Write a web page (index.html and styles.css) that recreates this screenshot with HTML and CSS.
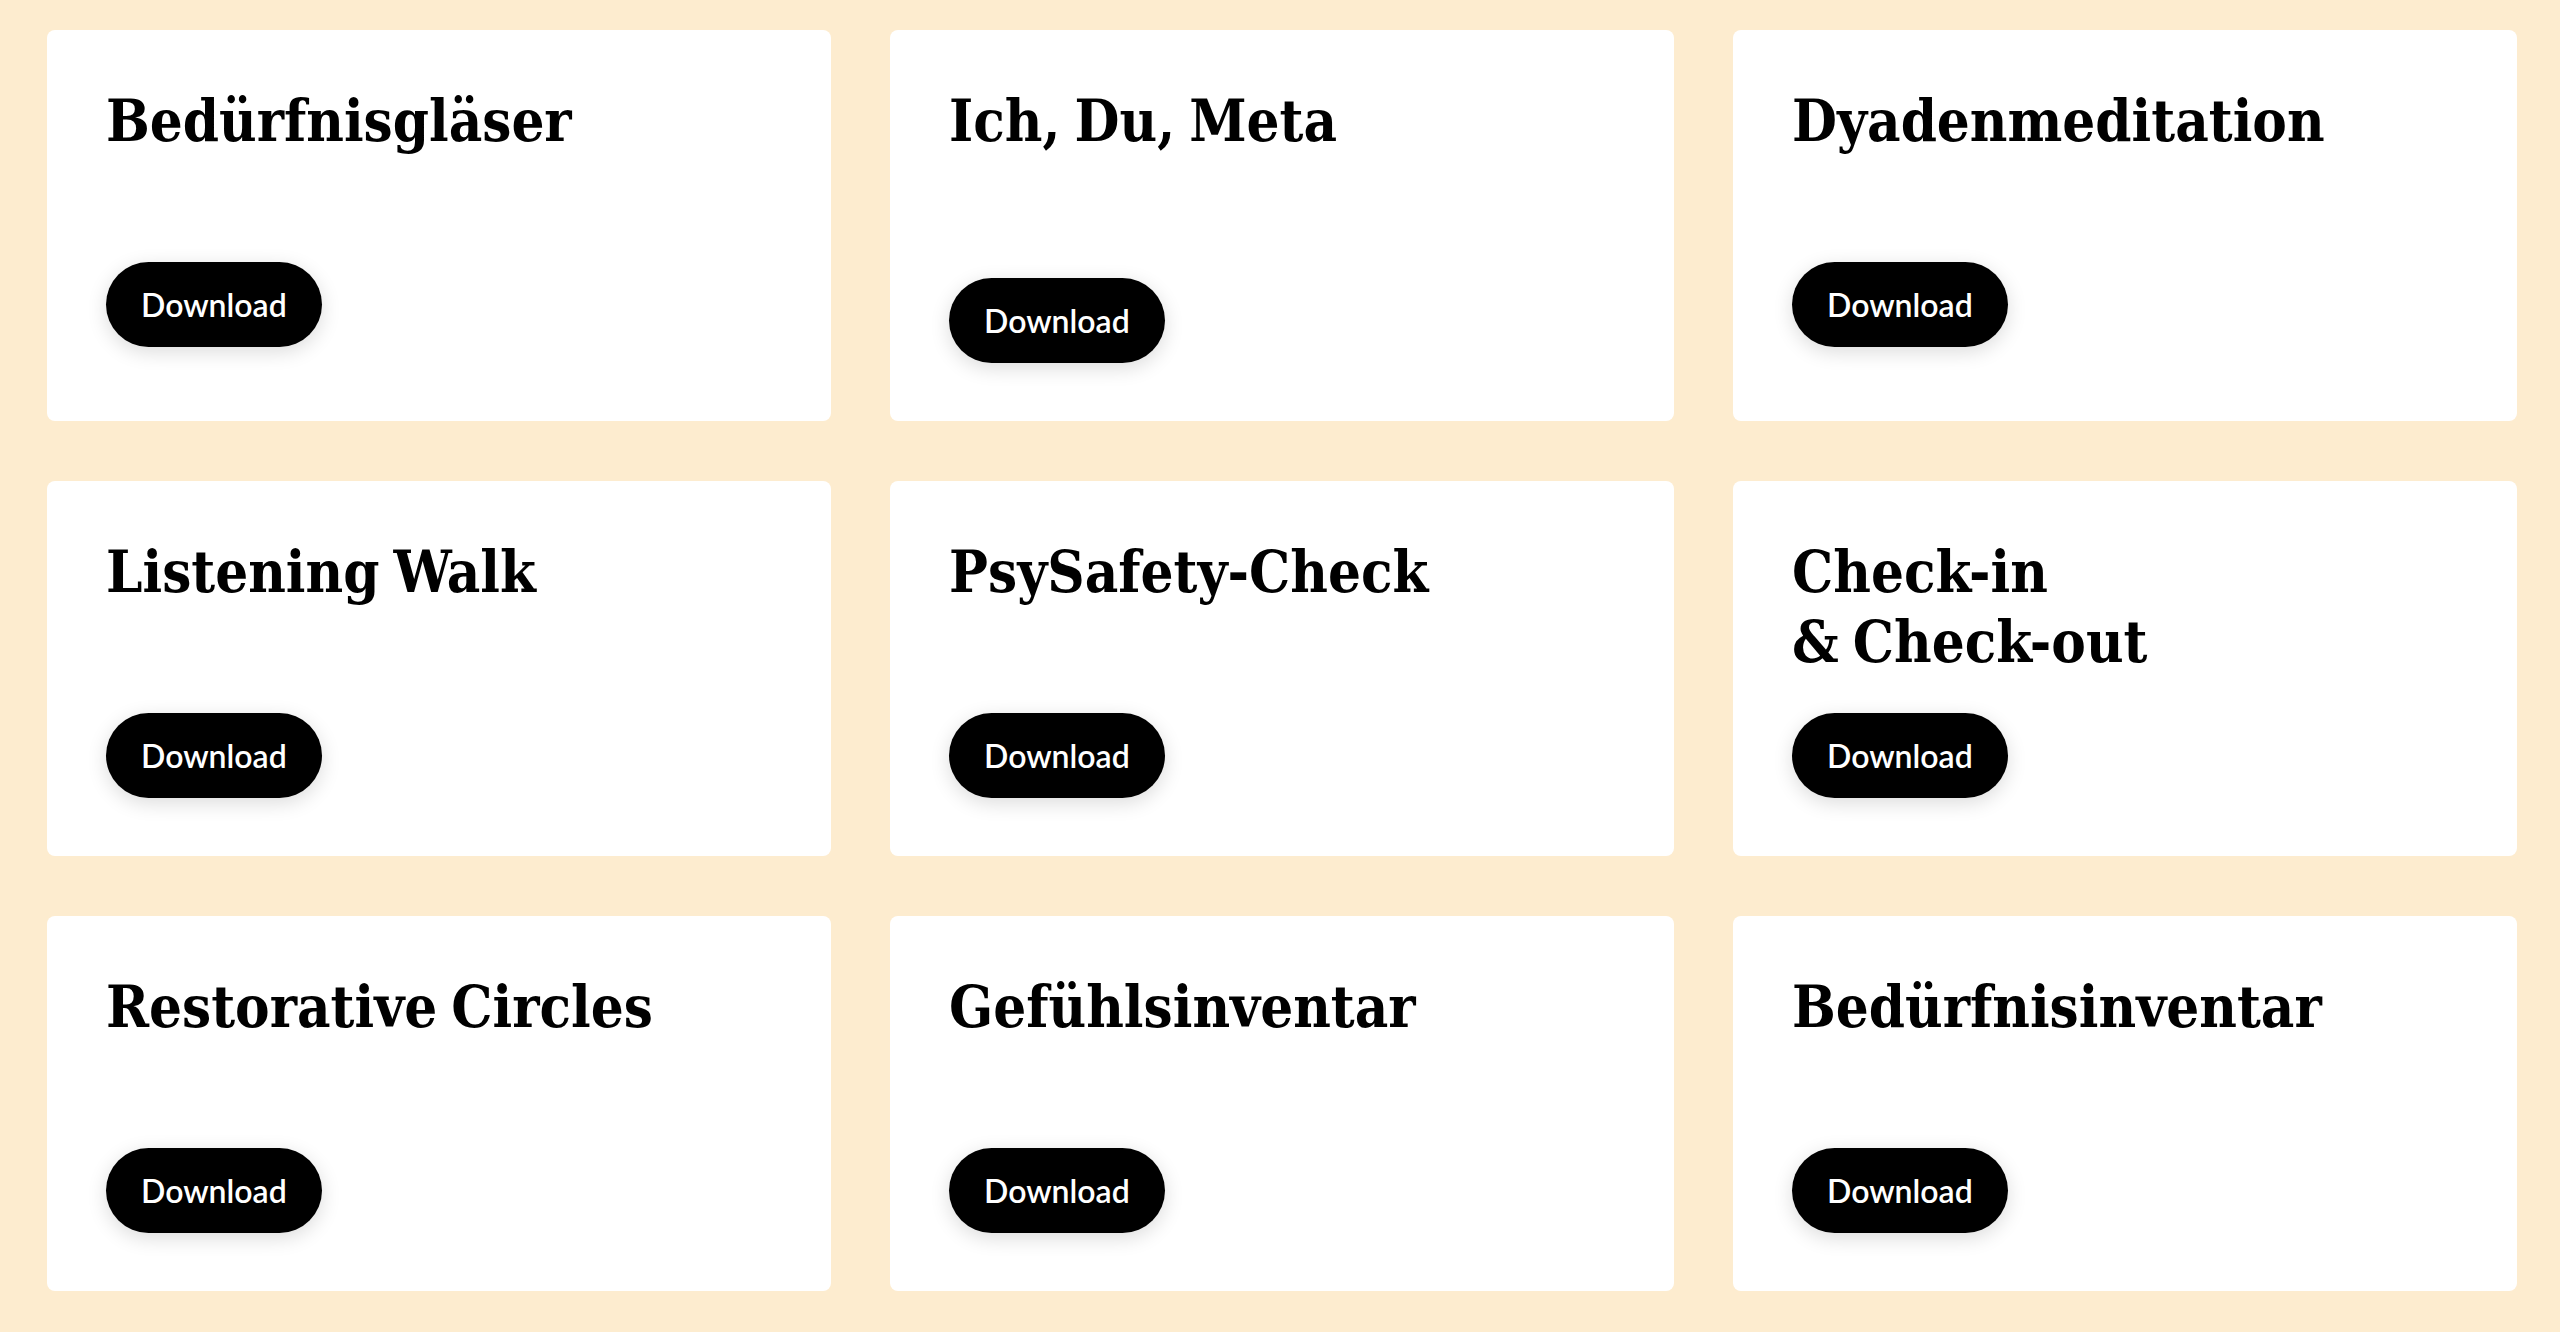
FILE: index.html
```html
<!DOCTYPE html>
<html lang="de">
<head>
<meta charset="utf-8">
<title>Downloads</title>
<link rel="stylesheet" href="styles.css">
</head>
<body>
<main class="grid">
  <article class="card">
    <h2 class="card-title">Bedürfnisgläser</h2>
    <a class="btn" href="#">Download</a>
  </article>
  <article class="card card--tall">
    <h2 class="card-title">Ich, Du, Meta</h2>
    <a class="btn" href="#">Download</a>
  </article>
  <article class="card">
    <h2 class="card-title">Dyadenmeditation</h2>
    <a class="btn" href="#">Download</a>
  </article>
  <article class="card">
    <h2 class="card-title">Listening Walk</h2>
    <a class="btn" href="#">Download</a>
  </article>
  <article class="card">
    <h2 class="card-title">PsySafety-Check</h2>
    <a class="btn" href="#">Download</a>
  </article>
  <article class="card">
    <h2 class="card-title">Check-in<br>&amp; Check-out</h2>
    <a class="btn" href="#">Download</a>
  </article>
  <article class="card">
    <h2 class="card-title">Restorative Circles</h2>
    <a class="btn" href="#">Download</a>
  </article>
  <article class="card">
    <h2 class="card-title">Gefühlsinventar</h2>
    <a class="btn" href="#">Download</a>
  </article>
  <article class="card">
    <h2 class="card-title">Bedürfnisinventar</h2>
    <a class="btn" href="#">Download</a>
  </article>
</main>
</body>
</html>
```
FILE: styles.css
```css
html, body {
  margin: 0;
  padding: 0;
}

body {
  background: #fdeccf;
  min-height: 1332px;
  font-family: "DejaVu Serif", "Liberation Serif", serif;
  color: #000;
}

.grid {
  display: grid;
  grid-template-columns: repeat(3, 784px);
  column-gap: 59px;
  row-gap: 60px;
  padding: 30px 0 0 47px;
}

.card {
  background: #fff;
  border-radius: 8px;
  padding: 56px 59px 58px;
  display: flex;
  flex-direction: column;
  align-items: flex-start;
}

.card-title {
  margin: 0;
  font-family: "DejaVu Serif Condensed", "DejaVu Serif", serif;
  font-stretch: condensed;
  font-size: 57.6px;
  line-height: 70px;
  font-weight: 700;
  letter-spacing: 0;
  word-spacing: -4px;
  min-height: 140px;
}

.card--tall .card-title {
  min-height: 156px;
}

.btn {
  margin-top: 36px;
  display: inline-flex;
  align-items: center;
  justify-content: center;
  height: 85px;
  padding: 0 35px;
  box-sizing: border-box;
  background: #000;
  color: #fff;
  border-radius: 43px;
  font-family: Lato, "Open Sans", sans-serif;
  font-weight: 600;
  font-size: 32px;
  text-decoration: none;
  box-shadow: 0 5px 20px rgba(0, 0, 0, 0.14);
}
```
